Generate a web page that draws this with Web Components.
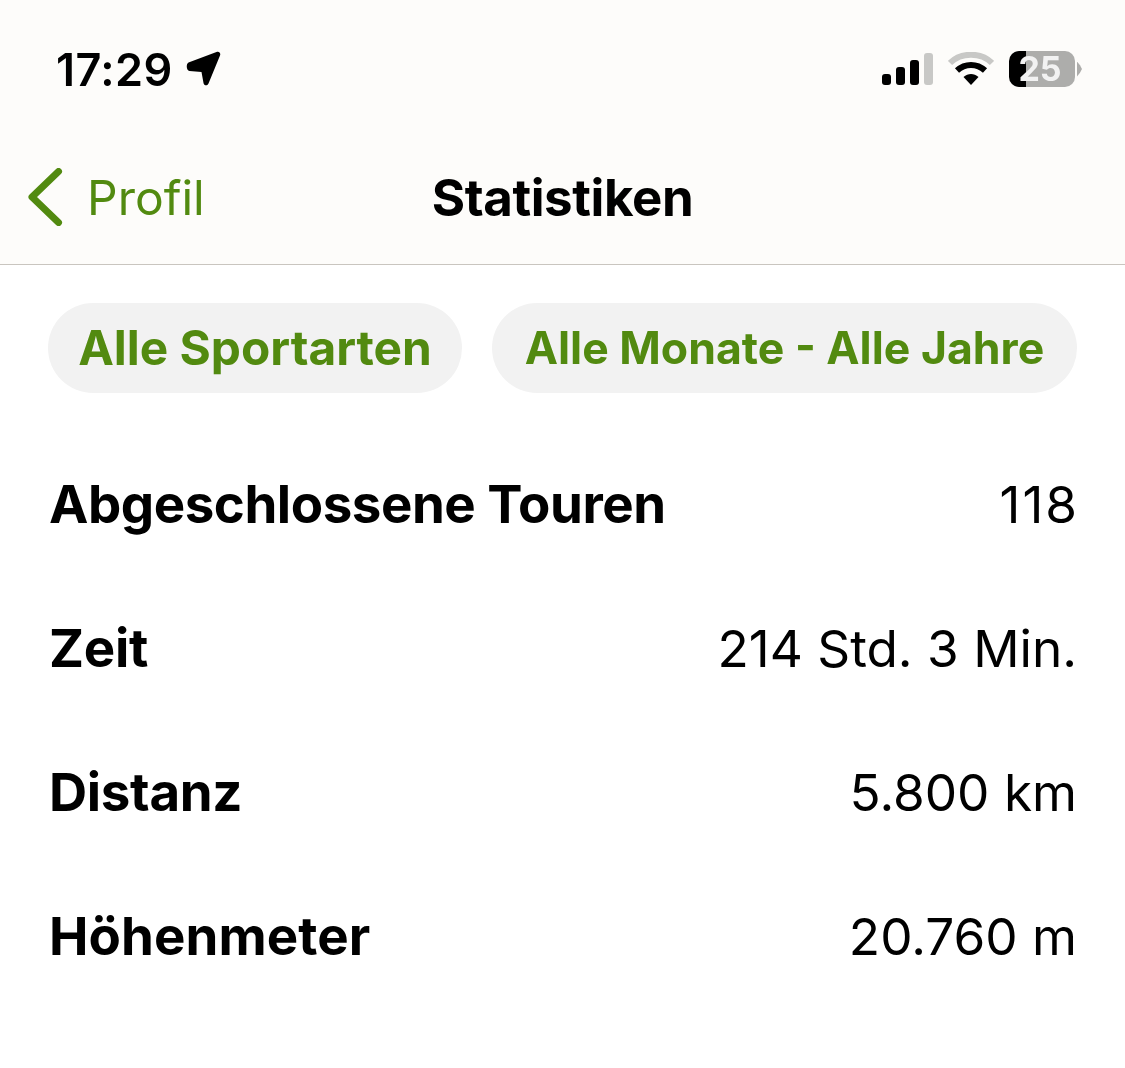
<!DOCTYPE html>
<html lang="de">
<head>
<meta charset="utf-8">
<title>Statistiken</title>
<style>
  html, body { margin: 0; background: #fff; }
  body { font-family: Inter, "Liberation Sans", sans-serif; color: #000; width: 1125px; height: 1068px; overflow: hidden; }
</style>
</head>
<body>
<stats-screen>
  <status-bar></status-bar>
  <nav-bar back="Profil" title="Statistiken"></nav-bar>
  <filter-bar>
    <filter-pill style="width:414px;font-size:47.8px">Alle Sportarten</filter-pill>
    <filter-pill style="width:585px;font-size:44.6px">Alle Monate - Alle Jahre</filter-pill>
  </filter-bar>
  <stat-list>
    <stat-row label="Abgeschlossene Touren" value="118" style="--label-track:-0.45px;--value-track:2px;--value-end:-2px"></stat-row>
    <stat-row label="Zeit" value="214 Std. 3 Min."></stat-row>
    <stat-row label="Distanz" value="5.800 km"></stat-row>
    <stat-row label="Höhenmeter" value="20.760 m" style="--label-track:0.1px"></stat-row>
  </stat-list>
</stats-screen>
<script>
const define = (name, html, init) => {
  customElements.define(name, class extends HTMLElement {
    constructor() {
      super();
      this.attachShadow({ mode: "open" });
      this.shadowRoot.innerHTML = html;
    }
    connectedCallback() {
      if (init) init(this);
    }
  });
};

define("stats-screen", `
<style>:host { display: block; width: 1125px; height: 1068px; will-change: transform; }</style>
<slot></slot>`);

define("status-bar", `
<style>
  :host { display: flex; align-items: center; justify-content: space-between; height: 138px; padding: 0 43px 0 56px; box-sizing: border-box; background: #fdfcfa; }
  .left { display: flex; align-items: center; gap: 13px; font-size: 45px; font-weight: 600; letter-spacing: 0.4px; }
  .right { display: flex; align-items: center; }
  svg { display: block; }
  .batt { position: relative; width: 66px; height: 36px; border-radius: 10px; background: linear-gradient(90deg, #000 0 26%, #adadab 26% 100%); margin-left: 15px; }
  .batt span { position: absolute; inset: 0 4px 0 0; text-align: center; line-height: 36px; font-size: 34px; font-weight: 700; color: #f2f2f2; }
  .tip { width: 5px; height: 15px; margin-left: 2px; background: #adadab; clip-path: polygon(0 0, 60% 25%, 100% 50%, 60% 75%, 0 100%); }
</style>
<div class="left">
  <span>17:29</span>
  <svg width="36" height="36" viewBox="0 0 36 36"><path d="M2.500 11.500 30.500 1c2.500-1 4.500 1 3.500 3.500L22.500 32.500c-1.200 2.700-4.500 2.300-5-.5L15.500 21 3.500 20c-3.200-.4-3.700-7-1-8.500z" fill="#000"/></svg>
</div>
<div class="right">
  <svg width="52" height="32" viewBox="0 0 52 32">
    <rect x="0" y="21" width="9" height="11" rx="3" fill="#000"/>
    <rect x="14" y="14" width="9" height="18" rx="3" fill="#000"/>
    <rect x="28" y="7" width="9" height="25" rx="3" fill="#000"/>
    <rect x="42" y="0" width="9" height="32" rx="3" fill="#c8c8c6"/>
  </svg>
  <svg width="46" height="34" viewBox="0 0 46 34" style="margin-left:14px">
    <path d="M2 11C13 0 33 0 44 11" fill="none" stroke="#c8c8c6" stroke-width="6"/>
    <path d="M9 18.500C17 11 29 11 37 18.500" fill="none" stroke="#000" stroke-width="6"/>
    <path d="M15.500 25C20 21 26 21 30.500 25L23 33z" fill="#000"/>
  </svg>
  <div class="batt"><span>25</span></div>
  <div class="tip"></div>
</div>`);

define("nav-bar", `
<style>
  :host { display: block; position: relative; height: 127px; box-sizing: border-box; background: #fdfcfa; border-bottom: 1px solid #c9c5bf; }
  .inner { height: 118px; display: flex; align-items: center; justify-content: center; }
  .title { font-size: 51px; font-weight: 700; letter-spacing: -0.4px; }
  .back { position: absolute; left: 28px; top: 0; height: 118px; display: flex; align-items: center; gap: 24px; color: #528a10; font-size: 48px; }
  svg { display: block; }
</style>
<div class="back">
  <svg width="35" height="58" viewBox="0 0 35 58"><path d="M30.500 3.500 4 29l26.500 25.500" fill="none" stroke="#528a10" stroke-width="7" stroke-linecap="round" stroke-linejoin="round"/></svg>
  <span id="back"></span>
</div>
<div class="inner"><span class="title" id="title"></span></div>`, (el) => {
  el.shadowRoot.getElementById("back").textContent = el.getAttribute("back");
  el.shadowRoot.getElementById("title").textContent = el.getAttribute("title");
});

define("filter-bar", `
<style>:host { display: flex; gap: 30px; padding: 38px 48px 0; }</style>
<slot></slot>`);

define("filter-pill", `
<style>
  :host { display: flex; align-items: center; justify-content: center; height: 90px; border-radius: 45px; background: #f2f2f2; color: #528a10; font-weight: 700; white-space: nowrap; }
</style>
<slot></slot>`);

define("stat-list", `
<style>:host { display: flex; flex-direction: column; padding: 39px 48px 0 49px; }</style>
<slot></slot>`);

define("stat-row", `
<style>
  :host { display: flex; justify-content: space-between; align-items: center; height: 144px; font-size: 51.300px; }
  b { font-weight: 700; font-size: 52.800px; letter-spacing: var(--label-track, -0.3px); }
  span { letter-spacing: var(--value-track, 0); margin-right: var(--value-end, 0); }
</style>
<b id="l"></b><span id="v"></span>`, (el) => {
  el.shadowRoot.getElementById("l").textContent = el.getAttribute("label");
  el.shadowRoot.getElementById("v").textContent = el.getAttribute("value");
});
</script>
</body>
</html>
